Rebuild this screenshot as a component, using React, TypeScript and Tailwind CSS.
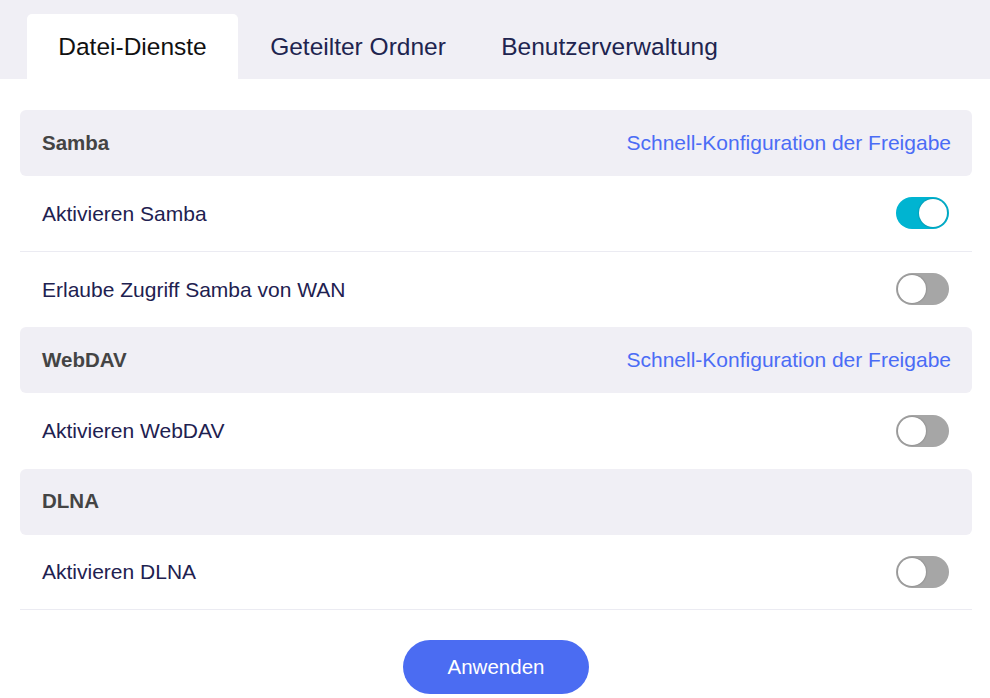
import { useState } from "react";

type Row = { key: string; label: string };
type Section = { title: string; quickLink: boolean; rows: Row[] };

const sections: Section[] = [
  {
    title: "Samba",
    quickLink: true,
    rows: [
      { key: "samba", label: "Aktivieren Samba" },
      { key: "sambaWan", label: "Erlaube Zugriff Samba von WAN" },
    ],
  },
  {
    title: "WebDAV",
    quickLink: true,
    rows: [{ key: "webdav", label: "Aktivieren WebDAV" }],
  },
  {
    title: "DLNA",
    quickLink: false,
    rows: [{ key: "dlna", label: "Aktivieren DLNA" }],
  },
];

const tabs = [
  { id: "services", label: "Datei-Dienste", width: "w-[211px]" },
  { id: "shared", label: "Geteilter Ordner", width: "w-[240px]" },
  { id: "users", label: "Benutzerverwaltung", width: "w-[263px]" },
];

function Toggle({ on, onChange }: { on: boolean; onChange: () => void }) {
  return (
    <button
      type="button"
      onClick={onChange}
      className={`relative h-[32px] w-[53px] shrink-0 rounded-full ${
        on ? "bg-[#00b4d1]" : "bg-[#a6a6a6]"
      }`}
    >
      <span
        className={`absolute top-[2px] h-[28px] w-[28px] rounded-full bg-white shadow-[0_0_2px_rgba(0,0,0,0.35)] ${
          on ? "left-[23px]" : "left-[2px]"
        }`}
      />
    </button>
  );
}

export default function App() {
  const [tab, setTab] = useState("services");
  const [enabled, setEnabled] = useState<Record<string, boolean>>({
    samba: true,
    sambaWan: false,
    webdav: false,
    dlna: false,
  });

  return (
    <div className="min-h-[698px] w-[990px] bg-white font-['Liberation_Sans',Arial,sans-serif]">
      <div className="flex h-[79px] items-end bg-[#f0eff5] pl-[27px]">
        {tabs.map((t) => (
          <button
            key={t.id}
            type="button"
            onClick={() => setTab(t.id)}
            className={`flex h-[65px] items-center justify-center rounded-t-[5px] pt-[2px] text-[24.5px] ${t.width} ${
              tab === t.id ? "bg-white text-[#111111]" : "text-[#20244f]"
            }`}
          >
            {t.label}
          </button>
        ))}
      </div>

      <div className="ml-[20px] w-[952px] pt-[31px]">
        {sections.map((s) => (
          <div key={s.title}>
            <div className="flex h-[66px] items-center justify-between rounded-[6px] bg-[#f0eff5] pl-[22px] pr-[21px]">
              <span className="text-[20.5px] font-bold text-[#444444]">{s.title}</span>
              {s.quickLink && (
                <a href="#" className="text-[21px] text-[#4b6cf5]">
                  Schnell-Konfiguration der Freigabe
                </a>
              )}
            </div>
            {s.rows.map((r, i) => (
              <div
                key={r.key}
                className={`flex h-[75.5px] items-center justify-between pl-[22px] pr-[23px] ${
                  i < s.rows.length - 1 || s.title === "DLNA"
                    ? "border-b border-[#ebebf2]"
                    : ""
                }`}
              >
                <span className="text-[21px] text-[#1e2150]">{r.label}</span>
                <Toggle
                  on={enabled[r.key]}
                  onChange={() =>
                    setEnabled((prev) => ({ ...prev, [r.key]: !prev[r.key] }))
                  }
                />
              </div>
            ))}
          </div>
        ))}
      </div>

      <div className="flex justify-center pt-[30px] pl-[2px]">
        <button
          type="button"
          className="h-[54px] w-[186px] rounded-full bg-[#4b6cf2] text-[20.5px] text-white"
        >
          Anwenden
        </button>
      </div>
    </div>
  );
}
